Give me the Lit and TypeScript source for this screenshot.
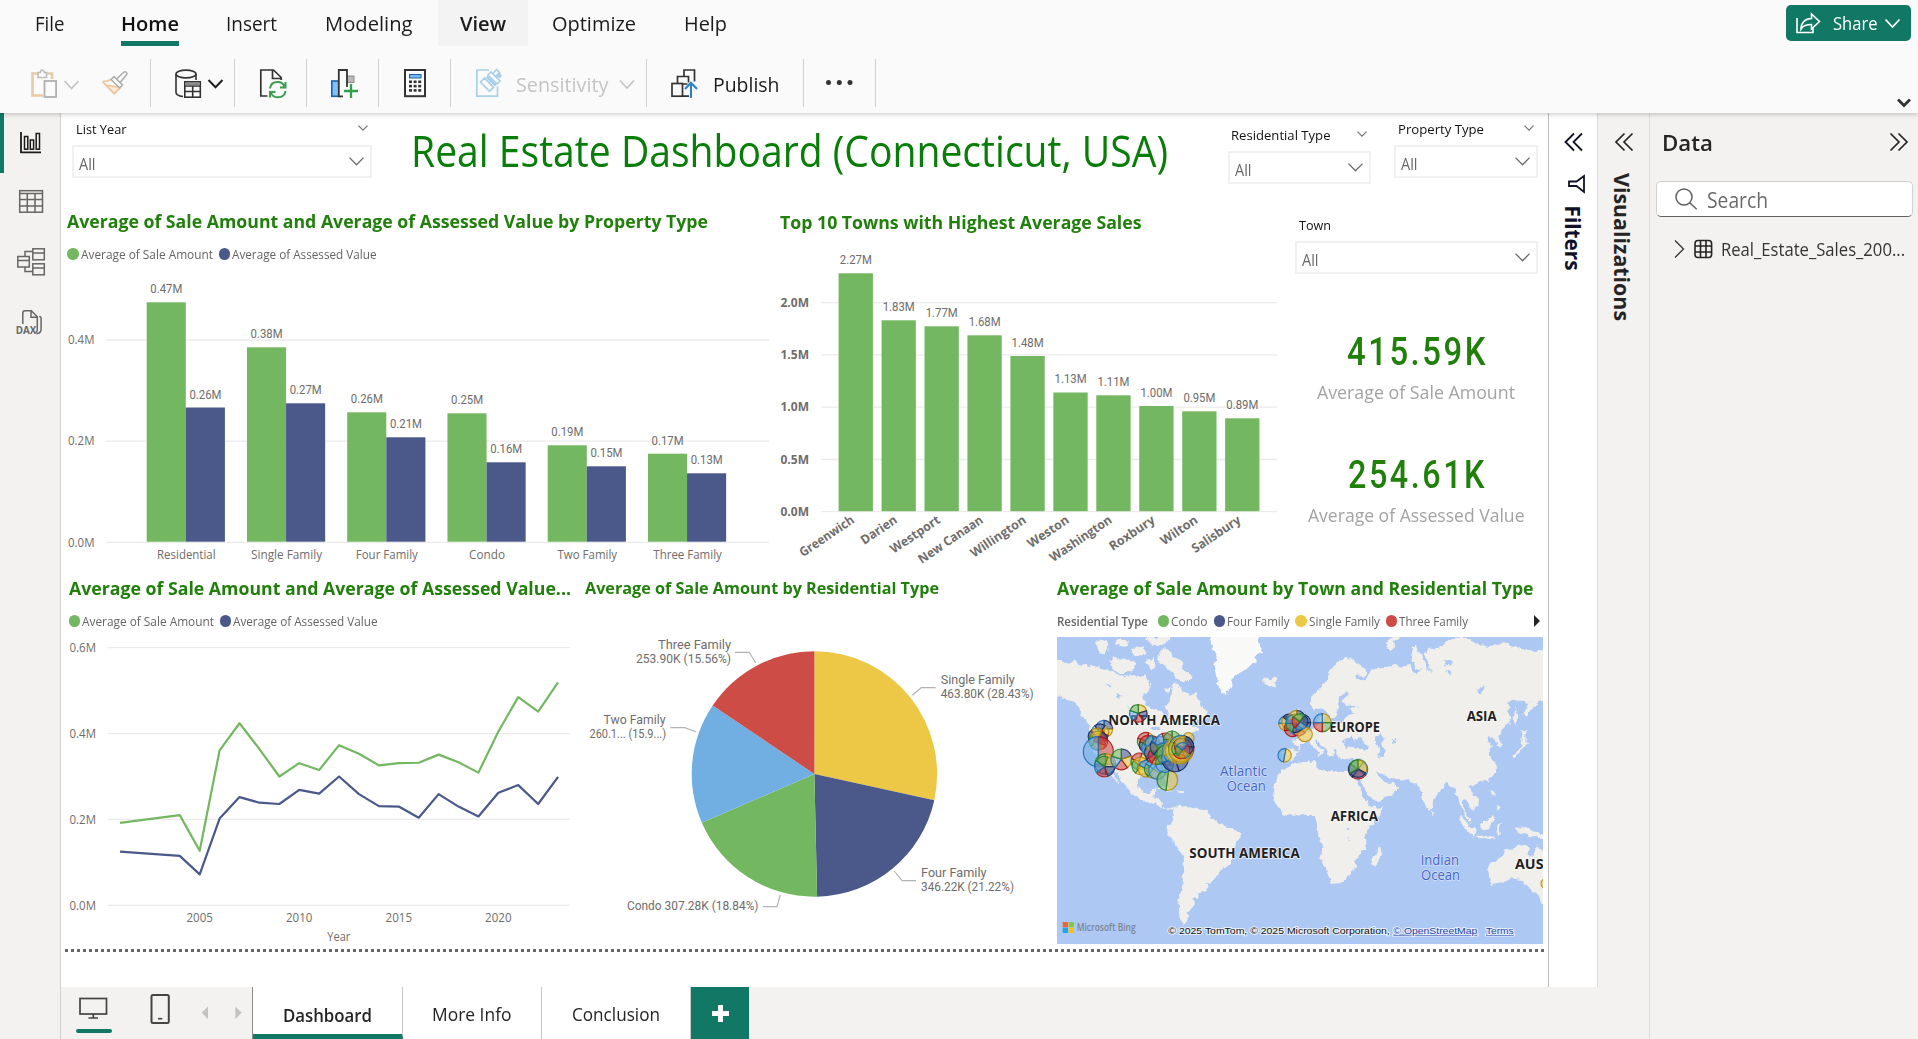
import { LitElement, html, svg, css } from "lit";
import { customElement, property } from "lit/decorators.js";

const GREEN = "#73b761";
const NAVY = "#4a588a";
const YELLOW = "#ecc846";
const RED = "#cd4c46";
const SKY = "#71afe2";

/* Text squeezed or stretched horizontally to a given width. */
@customElement("fit-text")
class FitText extends LitElement {
  @property({ type: Number }) w = 0;
  static styles = css`
    :host { display: inline-block; flex: none; }
    span { display: inline-block; white-space: pre; transform-origin: 0 50%; }
  `;
  render() {
    return html`<span><slot></slot></span>`;
  }
  updated() {
    const span = this.renderRoot.querySelector("span") as HTMLElement;
    span.style.transform = "none";
    this.style.width = "auto";
    const natural = span.getBoundingClientRect().width;
    this.style.width = this.w + "px";
    if (natural > 0) span.style.transform = `scaleX(${this.w / natural})`;
  }
}

const fit = (text: string, w: number, cls = "") =>
  html`<fit-text class=${cls} .w=${w}>${text}</fit-text>`;

/* SVG text with a fixed rendered width. */
const label = (x: number, y: number, text: string, w: number, cls: string, anchor = "start") =>
  svg`<text x=${x} y=${y} class=${cls} text-anchor=${anchor} textLength=${w} lengthAdjust="spacingAndGlyphs">${text}</text>`;

const chartText = css`
  :host { display: block; }
  svg { display: block; }
  text { font-family: "Open Sans", "Noto Sans", sans-serif; }
  .axis { font-size: 12.6px; fill: #6f6d6b; }
  .axisb { font-size: 12.6px; font-weight: 700; fill: #6f6d6b; }
  .din { font-family: Roboto, sans-serif; font-size: 12.6px; fill: #6f6d6b; }
  .pie { font-family: Roboto, sans-serif; font-size: 13px; fill: #6f6d6b; }
  .grid { stroke: #ebebeb; stroke-width: 1.3; }
`;

@customElement("property-chart")
class PropertyChart extends LitElement {
  static styles = chartText;
  rows = [
    { name: "Residential", w: 58.5, a: 302.3, al: "0.47M", b: 407.5, bl: "0.26M" },
    { name: "Single Family", w: 71, a: 347.3, al: "0.38M", b: 403.3, bl: "0.27M" },
    { name: "Four Family", w: 62, a: 412.3, al: "0.26M", b: 437.3, bl: "0.21M" },
    { name: "Condo", w: 36, a: 413.3, al: "0.25M", b: 462.3, bl: "0.16M" },
    { name: "Two Family", w: 59.5, a: 445.3, al: "0.19M", b: 466.3, bl: "0.15M" },
    { name: "Three Family", w: 68.5, a: 453.7, al: "0.17M", b: 473.3, bl: "0.13M" },
  ];
  render() {
    const grid: [number, string][] = [[340, "0.4M"], [441.2, "0.2M"], [542.3, "0.0M"]];
    return html`<svg width="714" height="309" viewBox="61 264 714 309">
      ${grid.map(([y, t]) => svg`<line class="grid" x1="106" x2="769" y1=${y} y2=${y} />${label(68, y + 4.2, t, 26.5, "axis")}`)}
      ${this.rows.map((r, i) => {
        const x = 146.7 + i * 100.25;
        return svg`
          <rect x=${x} y=${r.a} width="39.1" height=${541.7 - r.a} fill=${GREEN} />
          <rect x=${x + 39.1} y=${r.b} width="39.1" height=${541.7 - r.b} fill=${NAVY} />
          ${label(x + 19.6, r.a - 9.2, r.al, 32, "din", "middle")}
          ${label(x + 58.8, r.b - 9, r.bl, 32, "din", "middle")}
          ${label(x + 39.6, 559, r.name, r.w, "axis", "middle")}`;
      })}
    </svg>`;
  }
}

@customElement("town-chart")
class TownChart extends LitElement {
  static styles = chartText;
  rows: [string, number, number, string][] = [
    ["Greenwich", 63, 273.3, "2.27M"],
    ["Darien", 41, 320.3, "1.83M"],
    ["Westport", 57, 326.3, "1.77M"],
    ["New Canaan", 75, 335.3, "1.68M"],
    ["Willington", 64, 356, "1.48M"],
    ["Weston", 47, 392.5, "1.13M"],
    ["Washington", 72, 395.3, "1.11M"],
    ["Roxbury", 52, 406, "1.00M"],
    ["Wilton", 42, 411.3, "0.95M"],
    ["Salisbury", 56, 418.3, "0.89M"],
  ];
  render() {
    const grid: [number, string][] = [[302.6, "2.0M"], [354.9, "1.5M"], [407.2, "1.0M"], [459.5, "0.5M"], [511.7, "0.0M"]];
    return html`<svg width="510" height="339" viewBox="775 234 510 339">
      ${grid.map(([y, t]) => svg`<line class="grid" x1="821" x2="1277" y1=${y} y2=${y} />${label(780.5, y + 4.2, t, 28.5, "axisb")}`)}
      ${this.rows.map(([n, w, top, v], i) => {
        const x = 838.6 + i * 42.95;
        return svg`
          <rect x=${x} y=${top} width="34.3" height=${511.2 - top} fill=${GREEN} />
          ${label(x + 17.2, top - 9.2, v, 32, "din", "middle")}
          <g transform="translate(${x + 16.6} 522) rotate(-34)">${label(0, 0, n, w, "axisb", "end")}</g>`;
      })}
    </svg>`;
  }
}

@customElement("year-chart")
class YearChart extends LitElement {
  static styles = chartText;
  years = [2001, 2004, 2005, 2006, 2007, 2008, 2009, 2010, 2011, 2012, 2013, 2014, 2015, 2016, 2017, 2018, 2019, 2020, 2021, 2022, 2023];
  sale = [192, 210, 127, 361, 424, 364, 300, 331, 315, 373, 353, 326, 331, 332, 351, 333, 309, 405, 485, 451, 519];
  assessed = [125, 115, 72, 202, 252, 239, 236, 269, 260, 300, 259, 231, 230, 204, 259, 230, 207, 262, 280, 236, 299];
  line(values: number[]) {
    return values.map((v, i) => `${199.7 + (this.years[i] - 2005) * 19.91},${905.3 - v * 0.4293}`).join(" ");
  }
  render() {
    const grid: [number, string][] = [[647.7, "0.6M"], [733.6, "0.4M"], [819.4, "0.2M"], [905.3, "0.0M"]];
    return html`<svg width="514" height="315" viewBox="61 631 514 315">
      ${grid.map(([y, t]) => svg`<line class="grid" x1="107.6" x2="569.7" y1=${y} y2=${y} />${label(69.5, y + 4.3, t, 26.5, "axis")}`)}
      ${[2005, 2010, 2015, 2020].map((yr) => label(199.7 + (yr - 2005) * 19.91, 922, String(yr), 26.5, "axis", "middle"))}
      ${label(338.8, 941, "Year", 23, "axis", "middle")}
      <polyline points=${this.line(this.sale)} fill="none" stroke=${GREEN} stroke-width="2.2" stroke-linejoin="round" />
      <polyline points=${this.line(this.assessed)} fill="none" stroke=${NAVY} stroke-width="2.2" stroke-linejoin="round" />
    </svg>`;
  }
}

function wedge(cx: number, cy: number, r: number, from: number, to: number) {
  if (to - from >= 1) return `M${cx - r} ${cy}a${r} ${r} 0 1 1 ${2 * r} 0a${r} ${r} 0 1 1 ${-2 * r} 0Z`;
  const p = (f: number) => `${cx + r * Math.sin(f * 2 * Math.PI)} ${cy - r * Math.cos(f * 2 * Math.PI)}`;
  return `M${cx} ${cy}L${p(from)}A${r} ${r} 0 ${to - from > 0.5 ? 1 : 0} 1 ${p(to)}Z`;
}

@customElement("type-pie")
class TypePie extends LitElement {
  static styles = chartText;
  render() {
    const parts: [string, number][] = [[YELLOW, 0.2843], [NAVY, 0.2122], [GREEN, 0.1884], [SKY, 0.1595], [RED, 0.1556]];
    let at = 0;
    const leads = [
      "912.3,695.3 921.3,687.7 935.7,687.7",
      "894.3,871 902,880.7 916,880.7",
      "780.3,895 777,906.7 762.7,906.7",
      "696.3,732 684.7,727.7 670.3,727.7",
      "755.7,663 749.3,652.3 734.7,652.3",
    ];
    return html`<svg width="475" height="346" viewBox="575 600 475 346">
      ${parts.map(([c, f]) => {
        const d = wedge(814.4, 774, 122.7, at, at + f);
        at += f;
        return svg`<path d=${d} fill=${c} />`;
      })}
      ${leads.map((l) => svg`<polyline points=${l} fill="none" stroke="#b3b3b3" stroke-width="1.2" />`)}
      ${label(940.7, 684, "Single Family", 74, "pie")}
      ${label(940.7, 698, "463.80K (28.43%)", 93, "pie")}
      ${label(921, 877, "Four Family", 65.5, "pie")}
      ${label(921, 891, "346.22K (21.22%)", 93, "pie")}
      ${label(627, 910.3, "Condo 307.28K (18.84%)", 131.5, "pie")}
      ${label(603.5, 724.3, "Two Family", 62, "pie")}
      ${label(589.5, 738.3, "260.1... (15.9...)", 76.5, "pie")}
      ${label(658, 649.3, "Three Family", 73, "pie")}
      ${label(636, 663.3, "253.90K (15.56%)", 95, "pie")}
    </svg>`;
  }
}

const LAND = [
  // North America
  "0,262 21,268 40,278 60,280 78,272 95,290 120,285 140,290 160,300 180,296 200,312 215,318 235,322 250,316 270,318 283,312 295,335 305,345 300,360 285,368 280,385 285,400 300,412 320,420 337,425 343,440 350,456 358,445 355,425 348,410 358,395 362,375 365,350 378,340 390,350 400,362 410,370 420,378 432,366 445,385 455,400 465,415 470,428 455,440 440,447 425,455 405,460 418,466 440,468 445,480 425,490 415,500 405,512 395,527 390,545 380,560 372,580 355,590 345,600 347,615 352,640 340,620 330,605 315,605 300,608 285,610 270,620 263,640 268,660 280,672 295,670 300,658 320,655 315,675 310,685 330,690 335,700 335,712 345,720 360,716 372,714 362,724 345,722 330,712 315,700 300,695 285,692 265,684 245,672 235,655 225,645 215,630 205,615 195,605 185,595 190,610 200,630 205,642 193,630 180,610 170,595 160,580 150,570 135,550 125,530 122,510 120,490 125,470 110,450 95,437 90,420 80,405 65,395 45,385 0,378",
  "332,238 350,232 372,258 392,275 402,298 428,318 408,338 385,332 372,312 352,302 338,282 318,268 330,256",
  "180,272 205,262 232,268 262,280 252,300 222,312 190,300",
  "135,222 152,206 172,212 178,238 165,255 145,245",
  "195,205 225,208 238,225 215,232 198,224", "245,238 280,232 288,250 262,262 248,254", "290,201 365,201 350,222 315,228 298,216", "290,270 312,262 320,288 300,298",
  "340,350 362,358 352,368 338,362", "445,442 462,428 475,445 465,452",
  "640,340 645,325 660,328 672,320 682,332 675,345 655,350",
  "325,655 345,652 372,664 352,664", "382,664 400,662 406,670 386,672",
  // South America
  "370,714 390,705 400,712 420,712 440,718 465,720 480,730 495,745 500,760 520,768 545,775 570,790 572,805 560,820 550,840 548,870 540,885 520,892 505,905 495,925 480,940 465,945 475,955 465,965 445,970 445,985 430,990 435,1002 425,1015 415,1025 420,1035 410,1050 405,1066 392,1062 385,1040 390,1010 388,985 395,960 398,930 400,900 402,870 398,850 380,840 370,815 355,795 348,780 355,765 365,755 372,735",
  // Africa
  "725,581 745,580 765,575 795,570 800,580 800,592 815,600 830,608 845,600 870,605 895,606 912,612 915,625 925,645 935,665 945,685 955,705 965,712 998,708 995,720 980,745 960,770 945,790 945,815 947,835 930,850 915,870 915,885 900,905 885,930 865,940 845,942 838,925 830,905 820,880 810,855 820,835 812,815 808,800 800,785 802,765 798,750 790,738 770,738 750,732 730,735 712,738 695,728 682,712 672,695 668,675 674,660 670,645 680,625 692,612 700,598 715,592",
  "996,830 992,860 975,890 965,880 965,860 980,848",
  // Eurasia
  "700,545 705,538 730,540 745,545 743,530 735,520 725,512 745,508 755,495 770,487 785,478 800,470 805,455 808,438 822,436 825,460 840,465 865,462 880,455 885,440 895,432 910,428 900,418 925,412 900,408 885,405 880,390 897,375 885,365 870,380 865,400 862,420 855,440 840,450 830,430 820,415 805,420 790,418 780,405 785,385 800,370 815,350 830,325 845,300 865,278 890,262 915,270 930,285 950,300 945,315 920,318 925,330 945,325 962,310 965,295 990,292 1020,290 1040,285 1055,290 1075,285 1090,300 1105,315 1108,300 1093,285 1083,260 1090,228 1105,228 1110,250 1120,275 1135,302 1137,285 1120,250 1140,240 1170,235 1190,215 1215,203 1260,205 1290,225 1310,230 1340,222 1370,220 1400,230 1430,240 1500,245 1500,388 1470,392 1440,420 1435,445 1424,430 1430,408 1440,395 1410,395 1390,392 1370,395 1380,410 1370,430 1387,440 1375,460 1355,480 1345,500 1352,520 1352,537 1340,530 1335,510 1320,505 1310,515 1327,525 1315,545 1330,570 1342,590 1330,612 1310,630 1285,640 1270,645 1255,650 1265,665 1287,690 1285,705 1265,718 1255,700 1240,685 1235,700 1245,725 1260,745 1262,757 1245,735 1230,710 1225,680 1215,660 1200,650 1190,638 1175,655 1155,680 1145,700 1140,722 1130,715 1120,695 1115,665 1105,655 1090,640 1070,632 1040,630 1020,625 1000,612 985,604 988,620 1005,636 1020,638 1042,650 1038,662 1015,680 985,692 970,692 958,680 948,660 938,645 928,628 922,610 930,590 928,568 905,570 880,568 862,560 862,542 850,537 855,547 845,548 850,562 840,562 830,548 822,530 810,518 800,508 795,515 810,535 822,542 815,550 808,562 802,555 805,545 790,530 780,517 765,518 750,525 745,540 740,555 728,568 710,577 698,568",
  "735,428 748,418 755,440 772,472 760,485 730,487 742,465", "700,455 722,458 718,478 702,478",
  "1008,232 1018,212 1034,201 1052,201 1032,216 1025,246",
  "1380,558 1398,545 1412,530 1420,505 1414,480 1436,478 1426,492 1427,520 1412,545 1390,562", "1392,412 1400,425 1404,450 1396,468",
  "1228,735 1250,755 1278,785 1270,800 1250,780 1232,752", "1275,797 1300,797 1334,803 1332,808 1290,804", "1290,765 1310,752 1328,735 1334,745 1322,778 1300,780", "1338,765 1356,758 1346,772 1350,792 1340,790",
  "1322,660 1333,665 1333,685 1326,680", "1340,700 1352,712 1344,722", "1390,775 1415,768 1440,780 1478,790 1500,806 1465,803 1440,800 1410,785", "1148,718 1156,726 1150,736",
  // Australia
  "1315,880 1340,868 1360,855 1370,840 1390,838 1400,828 1425,825 1437,838 1432,850 1450,862 1460,840 1465,823 1475,845 1500,870 1500,1005 1478,995 1465,975 1450,965 1440,955 1415,930 1385,925 1355,940 1325,945 1320,920",
];
const WATER = [
  "880,520 890,505 905,500 915,512 930,505 945,520 957,532 940,540 910,532 890,537",
  "975,500 990,495 1002,510 995,525 1007,545 1000,562 985,555 987,535 975,520",
  "1028,508 1042,505 1040,520 1030,520", "1285,362 1298,340 1304,350 1292,372", "1140,290 1146,300 1142,312",
  "165,345 185,340 180,350", "195,380 215,372 205,386", "235,400 243,420 238,425", "890,770 902,775 898,785", "895,795 900,805 897,815",
  "300,478 325,470 335,482 312,486", "1180,275 1200,272 1204,285 1186,290", "1190,308 1205,304 1200,314",
];

@customElement("town-map")
class TownMap extends LitElement {
  static styles = css`
    :host { display: block; }
    svg { display: block; }
    text { font-family: "Open Sans", "Noto Sans", sans-serif; }
    .continent { font-size: 41px; font-weight: 700; fill: #1f1f1f; paint-order: stroke; stroke: #ffffff; stroke-width: 5px; stroke-opacity: .7; }
    .ocean { font-size: 42px; fill: #4564c4; paint-order: stroke; stroke: #d3e1f8; stroke-width: 4px; }
    .bing { font-size: 31px; font-weight: 600; fill: #7c8595; }
    .legal { font-family: "Liberation Sans", Arial, sans-serif; font-size: 27px; fill: #111; paint-order: stroke; stroke: #e6eefb; stroke-width: 6px; }
    .link { fill: #2347a8; text-decoration: underline; }
  `;
  pin(x: number, y: number, r: number, colors: string, start = 0) {
    const map: Record<string, [string, string]> = {
      y: [YELLOW, "#b08c08"], n: [NAVY, "#16265f"], g: [GREEN, "#23802a"], b: [SKY, "#1b6eb0"], r: [RED, "#a81414"],
    };
    const n = colors.length;
    return svg`${[...colors].map((c, i) => svg`<path d=${wedge(x, y, r, start + i / n, start + (i + 1) / n)} fill=${map[c][0]} fill-opacity=".58" stroke=${map[c][1]} stroke-width="3.4" stroke-opacity=".9" />`)}`;
  }
  render() {
    const pins: [number, number, number, string, number?][] = [
      [162, 477, 26, "nygb"], [150, 488, 26, "yrgbn", 0.1], [140, 500, 25, "rgbny", 0.1], [145, 512, 28, "nrbgy", 0.05], [148, 520, 18, "yr", 0.3],
      [145, 545, 45, "rb"], [166, 582, 31, "ybng"], [164, 590, 30, "ynrbg", 0.05],
      [214, 568, 31, "nyrbg"], [265, 430, 26, "ynrbg"],
      [268, 574, 25, "ybgr", 0.05], [272, 588, 26, "bygy", 0.1], [290, 596, 25, "yyb", 0.15], [310, 597, 27, "bygb", 0.1], [322, 602, 26, "b"],
      [352, 630, 31, "yg", 0.02],
      [288, 513, 26, "yrgr", 0.05], [296, 524, 28, "bgynr"], [305, 534, 30, "ynbg", 0.08], [318, 548, 34, "bnrnb", 0.05], [322, 556, 27, "nyrg", 0.1], [308, 520, 22, "ryb"],
      [330, 530, 30, "bgnb", 0.1], [345, 517, 28, "bgbr", 0.2], [366, 509, 26, "gybg"], [352, 555, 32, "bngy", 0.2], [344, 580, 27, "bgb", 0.4],
      [415, 505, 17, "y"], [372, 540, 34, "brgby", 0.1], [375, 565, 40, "nnby", 0.2], [368, 548, 28, "grbyr", 0.1],
      [388, 540, 42, "y"], [394, 534, 38, "nrygb", 0.04], [392, 540, 36, "y"], [396, 536, 30, "nbrgn", 0.05], [402, 528, 29, "nnry", 0.02], [398, 540, 22, "rygb", 0.1],
      [708, 460, 22, "gryb"], [718, 455, 23, "bgyn", 0.1], [740, 447, 26, "nbgy"], [756, 458, 26, "nnyb"], [728, 475, 25, "yrrb", 0.2], [745, 473, 25, "yrbg", 0.1], [765, 493, 22, "y"],
      [735, 460, 27, "bngby", 0.15], [750, 455, 24, "nbrg", 0.1],
      [817, 458, 27, "ygrb"], [704, 556, 20, "yb", 0.03], [924, 598, 29, "brng", 0.1], [924, 596, 26, "yng"], [1488, 941, 15, "y"],
    ];
    return html`<svg width="486" height="307" viewBox="21 201 1458 921">
      <defs>
        <filter id="coast" x="-2%" y="-2%" width="104%" height="104%">
          <feTurbulence type="fractalNoise" baseFrequency="0.045" numOctaves="3" seed="8" />
          <feDisplacementMap in="SourceGraphic" scale="22" xChannelSelector="R" yChannelSelector="G" />
        </filter>
      </defs>
      <rect x="21" y="201" width="1458" height="921" fill="#adc8f2" />
      <g filter="url(#coast)">
        ${LAND.map((p) => svg`<polygon points=${p} fill="#f0efeb" />`)}
        <polygon points="472,190 636,190 625,220 637,245 615,260 620,275 595,290 570,305 550,320 540,345 530,374 515,368 505,340 500,310 495,290 502,265 490,240" fill="#f9f9f8" />
        ${WATER.map((p) => svg`<polygon points=${p} fill="#adc8f2" />`)}
      </g>
      ${label(175, 465, "NORTH AMERICA", 335, "continent")}
      ${label(838, 486, "EUROPE", 152, "continent")}
      ${label(1250, 452, "ASIA", 90, "continent")}
      ${label(842, 752, "AFRICA", 142, "continent")}
      ${label(418, 864, "SOUTH AMERICA", 331, "continent")}
      ${label(1395, 896, "AUSTRALIA", 236, "continent")}
      ${label(510, 618, "Atlantic", 142, "ocean")}
      ${label(530, 664, "Ocean", 117, "ocean")}
      ${label(1112, 885, "Indian", 115, "ocean")}
      ${label(1113, 931, "Ocean", 117, "ocean")}
      ${pins.map(([x, y, r, c, s]) => this.pin(x, y, r, c, s ?? 0))}
      <rect x="38" y="1056" width="16" height="16" fill="#f2652a" />
      <rect x="56" y="1056" width="16" height="16" fill="#8cc63f" />
      <rect x="38" y="1073" width="16" height="16" fill="#1ba8e8" />
      <rect x="56" y="1073" width="16" height="16" fill="#fbbf12" />
      ${label(80, 1083, "Microsoft Bing", 177, "bing")}
      ${label(355, 1091, "© 2025 TomTom, © 2025 Microsoft Corporation,", 664, "legal")}
      ${label(1030, 1091, "© OpenStreetMap", 252, "legal link")}
      ${label(1308, 1091, "Terms", 83, "legal link")}
    </svg>`;
  }
}

@customElement("list-slicer")
class ListSlicer extends LitElement {
  @property() name = "";
  @property({ type: Number }) textwidth = 50;
  @property({ type: Boolean }) menu = false;
  static styles = css`
    :host { display: block; flex: none; font-family: "Open Sans", "Noto Sans", sans-serif; }
    .head { display: flex; justify-content: space-between; align-items: center; height: 20px; padding: 0 4px 0 3.6px; font-size: 13.2px; line-height: 20px; color: #111; }
    .box { display: flex; justify-content: space-between; align-items: center; box-sizing: border-box; height: 32.5px; margin-top: 6px; padding: 0 6px 0 5px; border: 2px solid #f1f1f1; font-size: 15.5px; line-height: 24px; color: #666; }
    fit-text { padding-top: 5px; }
    .head fit-text { padding-top: 0; }
    svg { fill: none; stroke: #6a6a6a; stroke-width: 1.3; }
    .head svg { margin-bottom: 3px; stroke: #777; }
  `;
  render() {
    return html`
      <div class="head">${fit(this.name, this.textwidth)}
        ${this.menu ? html`<svg width="10" height="6"><path d="M.5 .6L5 5.1 9.5 .6" /></svg>` : ""}</div>
      <div class="box">${fit("All", 16.5)}<svg width="15" height="9"><path d="M.5 .6L7.5 7.8 14.5 .6" /></svg></div>`;
  }
}

/* Icons are drawn on a window-wide coordinate grid; x and y give the icon's corner on it. */
const icon = (x: number, y: number, w: number, h: number, body: unknown) =>
  html`<svg width=${w} height=${h} viewBox="${x} ${y} ${w} ${h}" fill="none">${body}</svg>`;

@customElement("app-root")
class AppRoot extends LitElement {
  static styles = css`
    :host { display: flex; flex-direction: column; width: 1918px; height: 1039px; overflow: hidden; background: #fff; font-family: "Open Sans", "Noto Sans", sans-serif; color: #1b1b1b; }
    * { box-sizing: border-box; }
    svg { display: block; flex: none; overflow: visible; }
    .ribbon { flex: none; height: 113px; background: #fafafa; box-shadow: 0 1px 5px rgba(0, 0, 0, .24); z-index: 2; }
    .top { display: flex; height: 46px; justify-content: space-between; }
    .tabs { display: flex; font-size: 20px; line-height: 46px; }
    .tab { display: flex; flex-direction: column; height: 46px; }
    .tab.hover { background: #f3f3f3; }
    .tab.on, .tab.hover { font-weight: 600; }
    .tab.on { color: #111; }
    .tab fit-text { height: 41px; line-height: 48px; }
    .tab.on::after { content: ""; height: 5px; background: #117865; }
    .share { display: flex; align-items: center; width: 125px; height: 36px; margin: 5px 7px 0 0; padding-left: 9px; border-radius: 5px; background: #117865; color: #fff; font-size: 18px; line-height: 36px; }
    .share fit-text { margin: 0 6px 0 12px; }
    .lower { display: flex; justify-content: space-between; align-items: flex-end; height: 67px; }
    .tools { display: flex; height: 54px; align-self: flex-start; padding-top: 0; margin-top: 13px; }
    .group { display: flex; align-items: center; height: 48px; border-right: 1px solid #cfcfcf; font-size: 20px; line-height: 48px; }
    .group fit-text { padding-top: 3px; height: 48px; line-height: 45px; margin: 0 1px 0 -1px; }
    .dim { color: #c4c4c4; }
    .collapse { padding: 0 6px 5px 0; }
    .main { display: flex; height: 926px; }
    .rail { display: flex; flex-direction: column; width: 61px; background: #f3f2f1; border-right: 1px solid #d2d0ce; }
    .nav { display: flex; align-items: center; height: 61px; }
    .nav.on { height: 60px; border-left: 4px solid #117865; }
    .center { display: flex; flex-direction: column; width: 1537px; }
    .report { display: flex; height: 874px; }
    .canvas { display: flex; flex-direction: column; width: 1488px; background: #fff; border-right: 1px solid #c0c0c0; }
    .header { display: flex; height: 83px; padding: 6px 10.5px 0 11px; }
    .title { margin-left: 38.7px; font-size: 43.6px; line-height: 60px; color: #087d08; height: 60px; padding-top: 1px; }
    .push { margin-left: auto; margin-right: 23.5px; padding-top: 6px; }
    .row1 { display: flex; height: 377px; }
    .row2 { display: flex; height: 373px; }
    h2 { display: flex; margin: 0; height: 24px; line-height: 24px; font-size: 17.6px; font-weight: 700; color: #217f0c; }
    .legend { display: flex; align-items: center; height: 20px; gap: 6px; font-size: 12.8px; line-height: 20px; color: #666462; }
    .key { display: flex; align-items: center; gap: 2px; }
    .dot { width: 11.4px; height: 11.4px; border-radius: 50%; }
    .v1 { width: 714px; padding-top: 13px; }
    .v1 h2, .v1 .legend { margin-left: 6.3px; }
    .v1 .legend { margin-top: 11px; }
    .v2 { width: 510px; padding-top: 14px; }
    .v2 h2 { margin-left: 4.6px; }
    .cards { width: 262px; padding: 19px 9.5px 0 10px; }
    .card { display: flex; flex-direction: column; align-items: center; }
    .value { margin-top: 58.5px; height: 40px; line-height: 40px; font-family: Roboto, sans-serif; font-weight: 500; font-size: 38.5px; letter-spacing: 3px; color: #217f0c; padding-left: 3px; }
    .card + .card .value { margin-top: 50.6px; }
    .caption { margin-top: 8px; height: 24px; line-height: 24px; font-size: 17.4px; color: #a3a3a3; }
    .v3 { width: 514px; padding-top: 3.4px; }
    .v3 h2 { margin-left: 7.8px; }
    .v3 .legend { margin: 10.6px 0 0 7.6px; }
    .v4 { width: 475px; padding-top: 2.6px; }
    .v4 h2 { margin-left: 9.6px; font-size: 16.4px; }
    .v4 type-pie { margin-top: .4px; }
    .v5 { width: 497px; padding: 3px 0 0 7px; }
    .v5 .legend { margin: 11px 0 6px; width: 483px; }
    .v5 .key { gap: 1.8px; }
    .v5 .lead { font-weight: 600; margin-right: 4px; }
    .more { margin-left: auto; }
    .dots { height: 3px; width: 1479px; margin: 3px 0 0 4px; background: repeating-linear-gradient(90deg, #666 0 3px, transparent 3px 6px); }
    .filters { width: 49px; background: #fff; border-right: 1px solid #dcdcdc; padding-top: 19px; padding-left: 12px; }
    .pages { display: flex; height: 52px; background: #f3f2f1; }
    .view { width: 192px; border-right: 1px solid #8d8d8d; }
    .page { display: flex; align-items: center; height: 52px; background: #fff; border-right: 1px solid #c8c8c8; font-size: 17.4px; line-height: 52px; color: #252423; }
    .page fit-text { padding-top: 2px; }
    .page.on { font-weight: 600; border-bottom: 5px solid #117865; height: 52px; }
    .page.on fit-text { height: 52px; align-self: flex-start; }
    .add { display: flex; align-items: center; justify-content: center; width: 58px; background: #117865; }
    .viz { width: 52px; background: #f3f2f1; border-right: 1px solid #dedcda; padding: 19px 0 0 16px; }
    .data { width: 268px; background: #f3f2f1; }
    .dhead { display: flex; justify-content: space-between; align-items: center; height: 58px; padding: 0 9px 0 12px; font-size: 22px; font-weight: 600; line-height: 57px; color: #252423; }
    .search { display: flex; align-items: center; height: 36px; margin: 10px 5px 0 6px; padding-left: 18px; border: 1px solid #d1d1d1; border-bottom-color: #616161; border-radius: 5px; background: #fff; font-size: 21px; line-height: 34px; color: #6a6a6a; }
    .search fit-text { margin-left: 9px; padding-top: 2px; }
    .table { display: flex; align-items: center; margin-top: 15px; height: 34px; padding-left: 23px; font-size: 17.6px; line-height: 34px; color: #333; }
    .table fit-text { margin-left: 8px; }
    .side { font-family: "Open Sans", "Noto Sans", sans-serif; font-size: 22px; font-weight: 700; }
    .dax { font-family: "Open Sans", sans-serif; font-size: 10.5px; font-weight: 700; fill: #666; }
  `;

  menu: [string, number, number, number, string][] = [
    ["File", 29.5, 35, 33.5, ""],
    ["Home", 58, 23, 23, "on"],
    ["Insert", 51, 24, 24, ""],
    ["Modeling", 87.5, 24, 25.5, ""],
    ["View", 46, 22, 22, "hover"],
    ["Optimize", 84, 24, 24, ""],
    ["Help", 43, 24, 0, ""],
  ];

  key(color: string, text: string, w: number) {
    return html`<span class="key"><span class="dot" style="background:${color}"></span>${fit(text, w)}</span>`;
  }

  ribbon() {
    return html`<div class="ribbon">
      <div class="top">
        <div class="tabs">${this.menu.map(([t, w, l, r, c]) => html`<div style="padding:0 ${r}px 0 ${l}px" class="tab ${c}">${fit(t, w)}</div>`)}</div>
        <div class="share">
          ${icon(1795, 11, 26, 23, svg`<g stroke="#fff" stroke-width="1.6"><path d="M1797 17v14.5h16v-5" /><path d="M1801 28c0-6 4-10.500 10.500-10.500v-4.500l8 7.500-8 7.500v-4.500c-5 0-8.500 1-10.500 4.500z" stroke-linejoin="miter" /></g>`)}
          ${fit("Share", 44.5)}
          ${icon(1883, 17, 17, 12, svg`<path d="M1884.500 19.500l7 7.500 7-7.500" stroke="#fff" stroke-width="1.8" />`)}
        </div>
      </div>
      <div class="lower">
        <div class="tools">
          <div class="group">${icon(0, 59, 150, 48, svg`
            <path d="M38 73.500h-5.500v22h10.500M46.500 73.500h5.500v5.500" stroke="#e9c9a6" stroke-width="2.6" />
            <path d="M38 77.500v-5h2.200c.3-1.800 1-2.500 2-2.500s1.800.7 2 2.500h2.300v5z" stroke="#bdbdbd" stroke-width="1.6" fill="#fafafa" />
            <rect x="44.500" y="81" width="11.600" height="16" stroke="#b0b0b0" stroke-width="1.8" fill="#fafafa" />
            <path d="M64.500 81l7 7.500 7-7.500" stroke="#c4c4c4" stroke-width="1.6" />
            <path d="M104 85l9 2 7.500 .8-6 5.700z" fill="#fdebd6" />
            <path d="M102.500 81.500l11.700 12.300 5.800-6M102.500 81.500c3.500 0 6-.6 8.500-2M105.500 85l14.500 2.500" stroke="#e9c39b" stroke-width="1.7" />
            <path d="M111 79.500l3-3 8.500 8.500-2.700 3z" stroke="#ababab" stroke-width="1.5" />
            <path d="M116.500 79l7.500-7c1.500-1 3.700.8 2.700 2.600l-6.500 7.900" stroke="#ababab" stroke-width="1.5" />`)}</div>
          <div class="group">${icon(151, 59, 83, 48, svg`
            <g stroke="#333" stroke-width="1.6"><ellipse cx="186" cy="74" rx="10" ry="3.900" /><path d="M176 74v18.500c0 2 3 3.500 7 4M196 74v6" />
            <rect x="184.800" y="81.800" width="15.500" height="15.400" fill="#fafafa" /><path d="M185 86h15M192.700 86v11M185 91.500h15" /></g><path d="M185 84h15" stroke="#8a8a8a" stroke-width="2.500" />
            <path d="M208.500 80l7 7.300 7-7.300" stroke="#222" stroke-width="2" />`)}</div>
          <div class="group">${icon(235, 59, 71, 48, svg`
            <path d="M267.500 96h-6.700v-26h12.700l7.700 7.500v2.500M272.500 70.500v8h8" stroke="#333" stroke-width="1.700" />
            <g stroke="#3c9c52" stroke-width="2"><path d="M270 88.500c.5-4 3.500-6.500 7.500-6.500 3.300 0 6 1.700 7 4.500M285.500 82v5.500h-5.500" /><path d="M285.500 91c-.5 4-3.500 6.300-7.500 6.300-3.300 0-6-1.700-7-4.300M270 97.500v-5.500h5.500" /></g>`)}</div>
          <div class="group">${icon(307, 59, 71, 48, svg`
            <rect x="345.500" y="76" width="8.500" height="6.500" fill="#b9b9b9" stroke="#8d8d8d" />
            <rect x="331.800" y="81" width="8.500" height="15.300" fill="#83c0f2" stroke="#1565ae" stroke-width="1.600" />
            <path d="M343 96.300h-4.200v-26.300h8.200v17" stroke="#333" stroke-width="1.800" fill="#fafafa" />
            <path d="M351 84v14M344 91h14" stroke="#31a24c" stroke-width="2.300" />`)}</div>
          <div class="group">${icon(379, 59, 71, 48, svg`
            <rect x="405" y="70" width="20" height="26.200" stroke="#333" stroke-width="2" fill="#fff" />
            <rect x="409.500" y="74.500" width="11.500" height="3.500" fill="#7fb9ee" stroke="#1565ae" stroke-width="1" />
            ${[0, 1, 2].map((r) => [0, 1, 2].map((c) => svg`<rect x=${409 + c * 4.600} y=${80.500 + r * 4.300} width="3" height="2.600" fill="#333" />`))}`)}</div>
          <div class="group dim">${icon(451, 59, 66, 48, svg`
            <g stroke="#a9cfe6" stroke-width="1.700"><path d="M489 70h-12.200v26.200h20.700v-10" />
            <path d="M480.500 82l4-4 9 9.500-4 3.800zM488 75l3-3 9 9-3 3zM493.500 73l3-3.500 3 3-3.500 3.500M497.500 77l3-3.500M499 78l2.500-3" /><path d="M486.500 76.500l9 9" stroke-width="2.500" /></g>`)}
            ${fit("Sensitivity", 92.5)}
            ${icon(609.5, 59, 36.5, 48, svg`<path d="M619.500 80.500l7 7.500 7-7.500" stroke="#c4c4c4" stroke-width="1.600" />`)}</div>
          <div class="group">${icon(647, 59, 67, 48, svg`
            <g stroke="#333" stroke-width="1.700"><path d="M684 77v-7h10.500v11.500M677.500 83v-6.500h11v6" /><rect x="672" y="83.500" width="10.500" height="12.700" /><path d="M682.500 96.200h6.500M682.500 84h5" /></g>
            <path d="M691 98v-15M685 89l6-6.300 6 6.300" stroke="#2b83c4" stroke-width="2.100" />`)}
            ${fit("Publish", 66.5)}
            ${icon(780.5, 59, 22.5, 48, "")}</div>
          <div class="group">${icon(804, 59, 71, 48, svg`<g fill="#333"><circle cx="828.500" cy="82.500" r="2.500" /><circle cx="839.300" cy="82.500" r="2.500" /><circle cx="850" cy="82.500" r="2.500" /></g>`)}</div>
        </div>
        <div class="collapse">${icon(1896, 97, 16, 11, svg`<path d="M1898 99.500l6 6 6-6" stroke="#333" stroke-width="2.800" />`)}</div>
      </div>
    </div>`;
  }

  rail() {
    return html`<div class="rail">
      <div class="nav on">${icon(4, 113, 56, 60, svg`<g stroke="#1b1b1b" stroke-width="1.500"><path d="M21 132v20.300h20" stroke-width="1.800" /><rect x="24.500" y="136.500" width="3.300" height="12.700" /><rect x="30.300" y="140" width="3.300" height="9.200" /><rect x="36.200" y="133.500" width="3.300" height="15.700" /></g>`)}</div>
      <div class="nav">${icon(0, 173, 60, 61, svg`<g stroke="#666" stroke-width="1.500"><rect x="19.700" y="190.700" width="22.800" height="21.500" /><path d="M20 193.500h23M20 199.500h23M20 206h23M27.300 193v19M35 193v19" /></g>`)}</div>
      <div class="nav">${icon(0, 234, 60, 61, svg`<g stroke="#666" stroke-width="1.500"><rect x="32.800" y="248.800" width="11.500" height="11" /><path d="M33 253h11" /><rect x="32.800" y="263.800" width="11.500" height="11" /><path d="M33 268h11" /><rect x="17.800" y="256.500" width="11.500" height="10.500" /><path d="M18 260.500h11M25 256v-4.500h8M25 267v4.500h8" /></g>`)}</div>
      <div class="nav">${icon(0, 295, 60, 61, svg`<g stroke="#666" stroke-width="1.500"><path d="M22.800 324v-11c0-1.500.8-2.300 2.300-2.300h6.200l6 6v13c0 1.500-.8 2.500-2 3M31 311v6.200h6.500" /><path d="M39.500 316l1.600 2v11c0 3-1.500 4.500-4.500 4.700" /></g><text class="dax" x="15.800" y="333.500" textLength="20.500" lengthAdjust="spacingAndGlyphs">DAX</text>`)}</div>
    </div>`;
  }

  render() {
    const legend = html`<div class="legend">${this.key(GREEN, "Average of Sale Amount", 132)}${this.key(NAVY, "Average of Assessed Value", 144.5)}</div>`;
    return html`
      ${this.ribbon()}
      <div class="main">
        ${this.rail()}
        <div class="center">
          <div class="report">
            <div class="canvas">
              <div class="header">
                <list-slicer name="List Year" textwidth="50.5" menu style="width:300px"></list-slicer>
                <div class="title">${fit("Real Estate Dashboard (Connecticut, USA)", 757)}</div>
                <list-slicer class="push" name="Residential Type" textwidth="99.5" menu style="width:143px"></list-slicer>
                <list-slicer name="Property Type" textwidth="86" menu style="width:143.5px"></list-slicer>
              </div>
              <div class="row1">
                <div class="v1"><h2>${fit("Average of Sale Amount and Average of Assessed Value by Property Type", 641)}</h2>${legend}<property-chart></property-chart></div>
                <div class="v2"><h2>${fit("Top 10 Towns with Highest Average Sales", 361.5)}</h2><town-chart></town-chart></div>
                <div class="cards">
                  <list-slicer name="Town" textwidth="32"></list-slicer>
                  <div class="card"><div class="value">${fit("415.59K", 141)}</div><div class="caption">${fit("Average of Sale Amount", 198)}</div></div>
                  <div class="card"><div class="value">${fit("254.61K", 139)}</div><div class="caption">${fit("Average of Assessed Value", 216.5)}</div></div>
                </div>
              </div>
              <div class="row2">
                <div class="v3"><h2>${fit("Average of Sale Amount and Average of Assessed Value...", 502)}</h2>${legend}<year-chart></year-chart></div>
                <div class="v4"><h2>${fit("Average of Sale Amount by Residential Type", 354)}</h2><type-pie></type-pie></div>
                <div class="v5"><h2>${fit("Average of Sale Amount by Town and Residential Type", 476.5)}</h2>
                  <div class="legend">${fit("Residential Type", 91, "lead")}${this.key(GREEN, "Condo", 36.500)}${this.key(NAVY, "Four Family", 62.500)}${this.key(YELLOW, "Single Family", 71)}${this.key(RED, "Three Family", 69)}
                    <svg class="more" width="6" height="12"><path d="M0 0l6 6-6 6z" fill="#252423" /></svg></div>
                  <town-map></town-map></div>
              </div>
              <div class="dots"></div>
            </div>
            <div class="filters">${icon(1561, 132, 30, 150, svg`
              <path d="M1574 133.500l-8.500 8.500 8.500 8.500M1582 133.500l-8.500 8.500 8.500 8.500" stroke="#10102a" stroke-width="1.800" />
              <path d="M1584 176v16l-7.500-6h-7.500v-4.500h7.500z" stroke="#10102a" stroke-width="1.800" />
              <text class="side" fill="#10102a" transform="translate(1564.500 205.500) rotate(90)" textLength="65" lengthAdjust="spacingAndGlyphs">Filters</text>`)}</div>
          </div>
          <div class="pages">
            <div class="view">${icon(61, 987, 191, 52, svg`
              <g stroke="#444" stroke-width="1.700"><rect x="80" y="998.500" width="26.500" height="15.500" /><path d="M93.300 1014v3.500M88.500 1018h9.500" /></g>
              <rect x="76" y="1029" width="36" height="4" rx="2" fill="#117865" />
              <rect x="151.500" y="995" width="17.300" height="28" rx="1.500" stroke="#444" stroke-width="2" /><path d="M158 1018.700h4.300" stroke="#444" stroke-width="1.600" />
              <path d="M208 1006.500v12.500l-6.300-6.200zM235.300 1006.500v12.500l6.400-6.200z" fill="#c4c2c0" />`)}</div>
            <div class="page on" style="width:150px;padding-left:29.5px">${fit("Dashboard", 89)}</div>
            <div class="page" style="width:139px;padding-left:29px">${fit("More Info", 79.5)}</div>
            <div class="page" style="width:149px;padding-left:29.5px">${fit("Conclusion", 88)}</div>
            <div class="add"><svg width="17" height="17"><path d="M8.500 0v17M0 8.500h17" stroke="#fff" stroke-width="5" /></svg></div>
          </div>
        </div>
        <div class="viz">${icon(1614, 132, 20, 200, svg`
          <path d="M1624.500 133.500l-8.500 8.500 8.500 8.500M1632.500 133.500l-8.500 8.500 8.500 8.500" stroke="#252423" stroke-width="1.700" />
          <text class="side" fill="#252423" transform="translate(1613.500 173) rotate(90)" textLength="148" lengthAdjust="spacingAndGlyphs">Visualizations</text>`)}</div>
        <div class="data">
          <div class="dhead">${fit("Data", 51)}${icon(1889, 132, 20, 20, svg`<path d="M1890.500 133.500l8.500 8.500-8.500 8.500M1898.500 133.500l8.500 8.500-8.500 8.500" stroke="#252423" stroke-width="1.700" />`)}</div>
          <div class="search">${icon(1675, 187, 23, 24, svg`<g stroke="#616161" stroke-width="1.500"><circle cx="1684" cy="197" r="8" /><path d="M1689.700 202.700l7 6.500" /></g>`)}${fit("Search", 61)}</div>
          <div class="table">${icon(1673, 239, 12, 20, svg`<path d="M1675 240.500l8.500 8.500-8.500 8.500" stroke="#333" stroke-width="1.300" />`)}
            ${icon(1685, 239, 28, 20, svg`<g stroke="#252423" stroke-width="1.600"><rect x="1695" y="240.500" width="16.600" height="17" rx="3" /><path d="M1700.500 240.500v17M1706 240.500v17M1695 246h17M1695 252h17" /></g>`)}
            ${fit("Real_Estate_Sales_200...", 184)}</div>
        </div>
      </div>`;
  }
}
